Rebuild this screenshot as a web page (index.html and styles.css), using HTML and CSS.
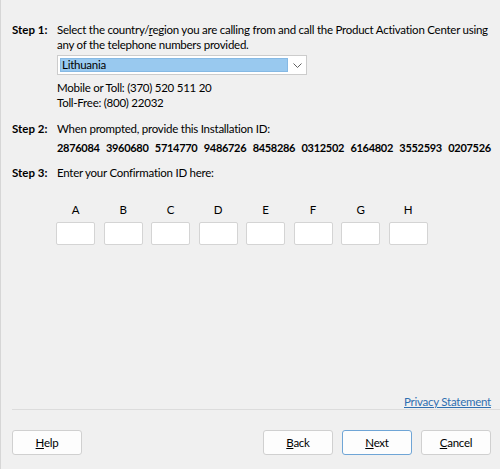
FILE: index.html
```html
<!DOCTYPE html>
<html lang="en">
<head>
    <meta charset="UTF-8">
    <meta name="viewport" content="width=device-width, initial-scale=1.0">
    <title>Activate by phone</title>
    <link rel="stylesheet" href="styles.css">
</head>
<body>
<div class="window">
    <div class="content">
        <div class="step">
            <div class="step-label">Step 1:</div>
            <div class="step-body">
                <p class="line">Select the country/<u>r</u>egion you are calling from and call the Product Activation Center using any of the telephone numbers provided.</p>
                <div class="select">
                    <div class="select-value">Lithuania</div>
                    <div class="select-arrow">
                        <svg width="9" height="5" viewBox="0 0 9 5"><path d="M0.5 0.5 L4.5 4.5 L8.5 0.5" fill="none" stroke="#606060" stroke-width="1"/></svg>
                    </div>
                </div>
                <p class="line phone-first">Mobile or Toll: (370) 520 511 20</p>
                <p class="line">Toll-Free: (800) 22032</p>
            </div>
        </div>

        <div class="step step-2">
            <div class="step-label">Step 2:</div>
            <div class="step-body">
                <p class="line">When prompted, provide this Installation ID:</p>
                <p class="line install-id">2876084&nbsp; 3960680&nbsp; 5714770&nbsp; 9486726&nbsp; 8458286&nbsp; 0312502&nbsp; 6164802&nbsp; 3552593&nbsp; 0207526</p>
            </div>
        </div>

        <div class="step step-3">
            <div class="step-label">Step 3:</div>
            <div class="step-body">
                <p class="line">Enter your Confirmation ID here:</p>
                <div class="conf-grid">
                    <div class="conf-col"><span>A</span><div class="conf-box"></div></div>
                    <div class="conf-col"><span>B</span><div class="conf-box"></div></div>
                    <div class="conf-col"><span>C</span><div class="conf-box"></div></div>
                    <div class="conf-col"><span>D</span><div class="conf-box"></div></div>
                    <div class="conf-col"><span>E</span><div class="conf-box"></div></div>
                    <div class="conf-col"><span>F</span><div class="conf-box"></div></div>
                    <div class="conf-col"><span>G</span><div class="conf-box"></div></div>
                    <div class="conf-col"><span>H</span><div class="conf-box"></div></div>
                </div>
            </div>
        </div>
    </div>

    <div class="footer">
        <div class="privacy"><a href="#">Privacy Statement</a></div>
        <div class="separator"></div>
        <div class="buttons">
            <button class="btn"><u>H</u>elp</button>
            <div class="spacer"></div>
            <button class="btn"><u>B</u>ack</button>
            <button class="btn btn-default"><u>N</u>ext</button>
            <button class="btn"><u>C</u>ancel</button>
        </div>
    </div>
</div>
</body>
</html>
```

FILE: styles.css
```css
html, body {
    margin: 0;
    padding: 0;
}
body {
    font-family: Lato, "Open Sans", sans-serif;
    font-size: 11.5px;
    letter-spacing: -0.25px;
    color: #000;
    background-color: #f0f0f0;
}
.window {
    height: 469px;
    box-sizing: border-box;
    border-left: 1px solid #d6d6d6;
    display: flex;
    flex-direction: column;
}
.content {
    padding: 22px 9px 0 11px;
}
p {
    margin: 0;
}
.line {
    line-height: 15px;
}
.step {
    display: grid;
    grid-template-columns: 45px 1fr;
}
.step-label {
    font-weight: bold;
    line-height: 15px;
    letter-spacing: 0;
}
.step-2 {
    margin-top: 11px;
}
.step-3 {
    margin-top: 10px;
}
.select {
    margin-top: 3px;
    width: 250px;
    height: 20px;
    box-sizing: border-box;
    border: 1px solid #cccccc;
    background: #fff;
    padding: 2px 0 2px 2px;
    display: flex;
}
.select-value {
    flex: 1;
    background: #99c9ef;
    border: 1px solid #86b9e4;
    line-height: 12px;
    padding-left: 1px;
}
.select-arrow {
    width: 18px;
    display: flex;
    align-items: center;
    justify-content: center;
}
.phone-first {
    margin-top: 5px;
}
.install-id {
    margin-top: 4px;
    font-weight: bold;
    font-size: 11px;
    letter-spacing: -0.3px;
    word-spacing: 0.8px;
    white-space: nowrap;
}
.conf-grid {
    margin-top: 22px;
    display: flex;
    gap: 8.5px;
    margin-left: -1px;
}
.conf-col {
    width: 39px;
    display: flex;
    flex-direction: column;
    align-items: center;
}
.conf-col span {
    line-height: 15px;
}
.conf-box {
    margin-top: 5px;
    width: 39px;
    height: 23px;
    box-sizing: border-box;
    background: #fff;
    border: 1px solid #d4d4d4;
    border-radius: 2px;
}
.footer {
    margin-top: auto;
    padding-bottom: 14px;
}
.privacy {
    text-align: right;
    line-height: 15px;
    padding-right: 9px;
}
.privacy a {
    color: #2f6fb0;
}
.separator {
    margin-left: 11px;
    height: 1px;
    background: #dcdcdc;
}
.buttons {
    margin-top: 20px;
    display: flex;
    gap: 9px;
    padding: 0 9px 0 11px;
}
.spacer {
    flex: 1;
}
.btn {
    width: 70px;
    height: 25px;
    font-family: inherit;
    font-size: 11.5px;
    letter-spacing: inherit;
    color: #000;
    background: #fdfdfd;
    border: 1px solid #d0d0d0;
    border-radius: 3px;
    padding: 0;
}
.btn-default {
    border-color: #6fa5d6;
}
```
